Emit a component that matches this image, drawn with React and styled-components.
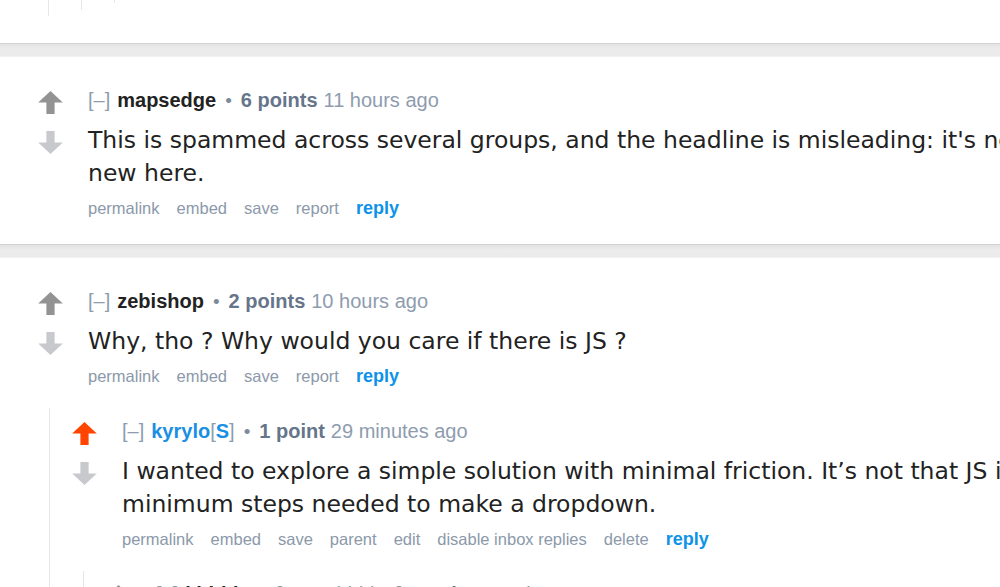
import React from 'react';
import styled, { createGlobalStyle } from 'styled-components';

const GlobalStyle = createGlobalStyle`
  html, body {
    margin: 0;
    padding: 0;
    background: #fff;
    overflow: hidden;
  }
`;

const comments = {
  mapsedge: {
    author: 'mapsedge',
    score: '6 points',
    time: '11 hours ago',
    text: "This is spammed across several groups, and the headline is misleading: it's nothing new here.",
    buttons: ['permalink', 'embed', 'save', 'report'],
  },
  zebishop: {
    author: 'zebishop',
    score: '2 points',
    time: '10 hours ago',
    text: 'Why, tho ? Why would you care if there is JS ?',
    buttons: ['permalink', 'embed', 'save', 'report'],
  },
  kyrylo: {
    author: 'kyrylo',
    submitter: true,
    liked: true,
    score: '1 point',
    time: '29 minutes ago',
    text: 'I wanted to explore a simple solution with minimal friction. It’s not that JS is bad, it’s minimum steps needed to make a dropdown.',
    buttons: ['permalink', 'embed', 'save', 'parent', 'edit', 'disable inbox replies', 'delete'],
  },
  reply: {
    author: 'khidd',
    hidden: true,
    score: '2 points',
    time: '8 minutes ago',
    text: '',
    buttons: [],
  },
};

function Arrow({ up, color }) {
  return (
    <ArrowIcon viewBox="0 0 15 14" $color={color}>
      {up ? (
        <polygon points="7.5,0 15,7 10,7 10,14 5,14 5,7 0,7" />
      ) : (
        <polygon points="7.5,14 15,7 10,7 10,0 5,0 5,7 0,7" />
      )}
    </ArrowIcon>
  );
}

function Comment({ data, children }) {
  return (
    <>
      <CommentRow>
        <Votes>
          <Arrow up color={data.liked ? '#ff4500' : '#939393'} />
          <Arrow color="#c8c9cd" />
        </Votes>
        <Entry>
          <Tagline>
            <Toggle>[–]</Toggle>
            <Author $submitter={data.submitter}>{data.author}</Author>
            {data.submitter && (
              <Flair>
                [<b>S</b>]
              </Flair>
            )}
            {data.hidden && <Hidden>[score hidden]</Hidden>}
            {!data.hidden && <Bullet>•</Bullet>}
            <Score>{data.score}</Score>
            <Time>{data.time}</Time>
          </Tagline>
          {data.text && <Body>{data.text}</Body>}
          {data.buttons.length > 0 && (
            <Buttons>
              {data.buttons.map((b) => (
                <Button key={b}>{b}</Button>
              ))}
              <Button $primary>reply</Button>
            </Buttons>
          )}
        </Entry>
      </CommentRow>
      {children && <Children>{children}</Children>}
    </>
  );
}

export default function App() {
  return (
    <Page>
      <GlobalStyle />
      <TopPanel>
        <TailThread $pad={6}>
          <TailThread $pad={7}>
            <TailThread $pad={0} $h={3} />
          </TailThread>
        </TailThread>
      </TopPanel>

      <Separator />

      <Panel>
        <Comment data={comments.mapsedge} />
      </Panel>

      <Separator />

      <Panel>
        <Comment data={comments.zebishop}>
          <Thread>
            <Comment data={comments.kyrylo}>
              <Thread>
                <Comment data={comments.reply} />
              </Thread>
            </Comment>
          </Thread>
        </Comment>
      </Panel>
    </Page>
  );
}

const Page = styled.div`
  width: 1300px;
  min-height: 587px;
  background: #fff;
`;

const TopPanel = styled.div`
  height: 43px;
`;

const TailThread = styled.div`
  margin-left: 48px;
  border-left: 1px solid #e3e8ed;
  padding-bottom: ${(p) => p.$pad}px;
  height: ${(p) => (p.$h ? `${p.$h}px` : 'auto')};

  & & {
    margin-left: 32px;
  }
`;

const Separator = styled.div`
  height: 12px;
  border-top: 1px solid #d3d3d3;
  border-bottom: 1px solid #f1f1f1;
  background: linear-gradient(#e3e3e3, #ececec 40%, #ebebeb);
`;

const Panel = styled.div`
  padding: 30px 0 25px 38px;
`;

const CommentRow = styled.div`
  display: flex;
`;

const Votes = styled.div`
  width: 50px;
  flex: none;
  display: flex;
  flex-direction: column;
  gap: 17px;
  padding-top: 4px;
`;

const ArrowIcon = styled.svg`
  width: 25px;
  height: 23px;
  fill: ${(p) => p.$color};
`;

const Entry = styled.div`
  flex: 1;
  min-width: 0;
`;

const Tagline = styled.div`
  display: flex;
  align-items: baseline;
  font-family: 'Liberation Sans', Arial, sans-serif;
  font-size: 20px;
  line-height: 26px;
  color: #8e9cae;
  white-space: nowrap;
`;

const Toggle = styled.span`
  margin-right: 7px;
`;

const Author = styled.span`
  font-weight: 700;
  color: ${(p) => (p.$submitter ? '#1a8fe3' : '#222')};
`;

const Flair = styled.span`
  color: #8e9cae;

  b {
    color: #1a8fe3;
  }
`;

const Hidden = styled.span`
  margin: 0 8px 0 38px;
  color: #8e9cae;
`;

const Bullet = styled.span`
  margin: 0 9px;
  font-size: 19px;
  color: #7d8a9a;
`;

const Score = styled.span`
  font-weight: 700;
  color: #66758a;
`;

const Time = styled.span`
  margin-left: 6px;
  color: #8e9cae;
`;

const Body = styled.div`
  margin-top: 10px;
  max-width: 1020px;
  font-family: 'DejaVu Sans', Verdana, sans-serif;
  font-size: 23.5px;
  line-height: 33px;
  color: #222;
`;

const Buttons = styled.div`
  margin-top: 7px;
  display: flex;
  gap: 17px;
  font-family: 'Liberation Sans', Arial, sans-serif;
  font-size: 16.5px;
  line-height: 22px;
`;

const Button = styled.span`
  color: ${(p) => (p.$primary ? '#0d93e8' : '#8b99aa')};
  font-weight: ${(p) => (p.$primary ? 700 : 400)};
  font-size: ${(p) => (p.$primary ? '18px' : 'inherit')};
`;

const Children = styled.div`
  margin: 21px 0 0 11px;
`;

const Thread = styled.div`
  border-left: 1px solid #e4e6e9;
  padding: 10px 0 0 22px;
`;
